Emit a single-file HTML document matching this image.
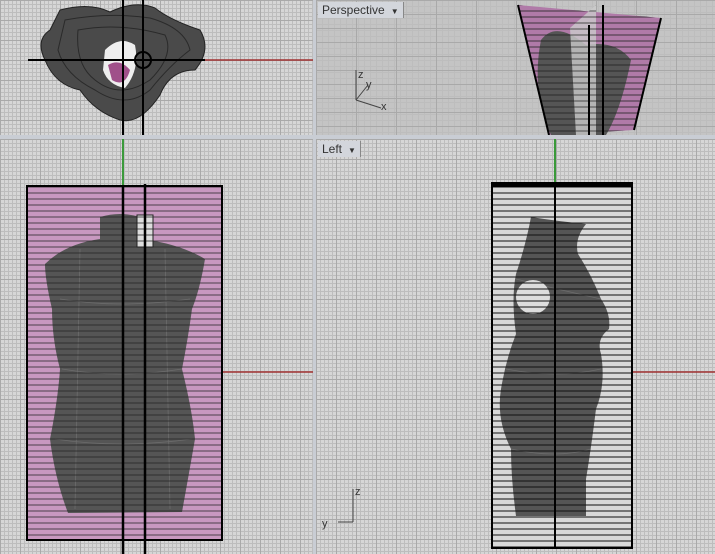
<!DOCTYPE html>
<html><head><meta charset="utf-8"><style>
html,body{margin:0;padding:0;width:715px;height:554px;overflow:hidden;background:#c9cdd4}
.vp{position:absolute;overflow:hidden;background-color:#d6d6d6;
background-image:linear-gradient(#a9a9a9 1px,transparent 1px),linear-gradient(90deg,#a9a9a9 1px,transparent 1px),linear-gradient(#bdbdbd 1px,transparent 1px),linear-gradient(90deg,#bdbdbd 1px,transparent 1px);
background-size:20px 20px,20px 20px,4px 4px,4px 4px}
.lbl{position:absolute;left:2px;top:2px;background:#d3d6dc;font:12px "Liberation Sans",sans-serif;color:#333;padding:1px 4px;border-right:1px solid #888}
.lbl span{display:inline-block;margin-left:6px;font-size:8px}
svg{position:absolute;left:0;top:0}
</style></head><body>
<div class="vp" style="left:0;top:0;width:313px;height:135px">
<svg width="313" height="135">
<line x1="205" y1="60" x2="313" y2="60" stroke="#a03030" stroke-width="1.5"/>
<path d="M60 10 Q90 2 110 12 Q135 0 155 8 Q170 20 200 30 Q212 50 195 70 Q170 70 160 95 Q140 125 120 120 Q95 112 80 90 Q55 85 45 60 Q35 40 50 30 Z" fill="#4a4a4a" stroke="#222"/>
<g fill="none" stroke="#2a2a2a" stroke-width="1"><path d="M65 20 Q110 12 150 18 Q185 28 190 50 Q170 65 150 90 Q125 110 95 90 Q65 75 58 50Z"/><path d="M78 30 Q120 22 165 35 Q175 55 150 80 Q120 100 95 80 Q75 65 78 30Z"/></g>
<path d="M105 50 Q120 35 135 45 Q140 70 125 88 Q108 85 103 70 Z" fill="#eee"/>
<path d="M108 65 Q120 58 130 70 Q125 88 112 80 Z" fill="#a0508a"/>
<line x1="28" y1="60" x2="205" y2="60" stroke="#000" stroke-width="2"/>
<line x1="123" y1="0" x2="123" y2="135" stroke="#000" stroke-width="2"/>
<line x1="143" y1="0" x2="143" y2="135" stroke="#000" stroke-width="2"/>
<circle cx="143" cy="60" r="8" fill="none" stroke="#000" stroke-width="2"/>
</svg></div>
<div class="vp" style="left:316px;top:0;width:399px;height:135px;background-color:#c4c4c4;background-size:30px 14px,40px 30px,6px 6px,6px 6px">
<svg width="399" height="135">
<defs><pattern id="hp" width="10" height="6" patternUnits="userSpaceOnUse"><line x1="0" y1="5" x2="10" y2="5" stroke="#222" stroke-width="1"/></pattern></defs>
<polygon points="202,5 345,18 318,130 233,135" fill="#b07aa8"/>
<path d="M225 40 Q240 20 270 45 Q300 40 315 60 Q305 110 290 135 L235 135 Q215 90 225 40Z" fill="#555"/>
<polygon points="202,5 345,18 318,130 233,135" fill="url(#hp)" opacity=".8"/>
<polygon points="254,28 280,5 280,135 260,135" fill="#ccc" opacity=".8"/>
<polygon points="254,28 280,5 280,135 260,135" fill="url(#hp)" opacity=".7"/>
<g stroke="#000" stroke-width="2" fill="none"><polyline points="202,5 233,135"/><polyline points="345,18 318,130"/><line x1="273" y1="25" x2="273" y2="135"/><line x1="287" y1="5" x2="287" y2="135"/></g>
<line x1="40" y1="70" x2="40" y2="100" stroke="#444"/><line x1="40" y1="100" x2="65" y2="108" stroke="#444"/><line x1="40" y1="100" x2="52" y2="85" stroke="#444"/>
<text x="42" y="78" font-size="11" font-family="Liberation Sans" fill="#333">z</text>
<text x="50" y="88" font-size="11" font-family="Liberation Sans" fill="#333">y</text>
<text x="65" y="110" font-size="11" font-family="Liberation Sans" fill="#333">x</text>
</svg><div class="lbl">Perspective<span>▼</span></div></div>
<div class="vp" style="left:0;top:139px;width:313px;height:415px">
<svg width="313" height="415">
<defs><pattern id="hp2" width="10" height="6" y="1" patternUnits="userSpaceOnUse"><line x1="0" y1="5" x2="10" y2="5" stroke="#222" stroke-width="1"/></pattern></defs>
<line x1="123" y1="0" x2="123" y2="47" stroke="#3a9a3a" stroke-width="2"/>
<line x1="222" y1="233" x2="313" y2="233" stroke="#a03030" stroke-width="1.5"/>
<rect x="27" y="47" width="195" height="354" fill="#c898c0"/>
<path d="M100 78 Q120 72 140 78 L142 100 Q180 105 205 120 Q200 150 192 170 Q188 200 182 230 Q192 270 195 300 Q188 340 182 373 L68 374 Q55 340 50 300 Q58 260 60 230 Q52 200 52 170 Q45 140 45 125 Q65 105 100 100 Z" fill="#555"/>
<g fill="none" stroke="#777" stroke-width=".8" opacity=".7"><path d="M60 160 Q120 170 190 160"/><path d="M62 230 Q120 240 182 230"/><path d="M55 300 Q120 310 192 300"/><path d="M80 110 L75 370"/><path d="M165 110 L170 370"/></g>
<rect x="137" y="76" width="16" height="32" fill="#ddd" stroke="#222"/>
<rect x="27" y="47" width="195" height="354" fill="url(#hp2)" opacity=".75"/>
<rect x="27" y="47" width="195" height="354" fill="none" stroke="#000" stroke-width="2"/>
<line x1="123" y1="47" x2="123" y2="415" stroke="#000" stroke-width="2.5"/>
<line x1="145" y1="45" x2="145" y2="415" stroke="#000" stroke-width="2.5"/>
</svg></div>
<div class="vp" style="left:316px;top:139px;width:399px;height:415px">
<svg width="399" height="415">
<defs><pattern id="hp3" width="10" height="6" y="1" patternUnits="userSpaceOnUse"><line x1="0" y1="5" x2="10" y2="5" stroke="#111" stroke-width="1"/></pattern></defs>
<line x1="239" y1="0" x2="239" y2="44" stroke="#3a9a3a" stroke-width="2"/>
<line x1="316" y1="233" x2="399" y2="233" stroke="#a03030" stroke-width="1.5"/>
<rect x="176" y="44" width="140" height="365" fill="#d8d8d8"/>
<path d="M215 78 Q240 82 270 85 Q258 100 262 115 Q275 135 285 160 Q295 175 293 190 Q280 200 285 215 Q290 245 280 270 Q275 310 270 340 L270 377 L200 377 Q195 340 195 310 Q180 280 185 250 Q190 220 200 195 Q195 160 200 135 Q210 105 215 78Z" fill="#555"/>
<g fill="none" stroke="#777" stroke-width=".8" opacity=".7"><path d="M200 140 Q240 150 285 160"/><path d="M190 230 Q240 240 285 230"/><path d="M195 310 Q240 320 275 310"/></g>
<circle cx="217" cy="158" r="17" fill="#ddd"/>
<rect x="176" y="44" width="140" height="365" fill="url(#hp3)"/>
<rect x="176" y="44" width="140" height="365" fill="none" stroke="#000" stroke-width="2"/>
<rect x="176" y="44" width="140" height="4" fill="#000"/>
<line x1="239" y1="44" x2="239" y2="409" stroke="#000" stroke-width="2"/>
<line x1="37" y1="350" x2="37" y2="383" stroke="#444"/><line x1="22" y1="383" x2="37" y2="383" stroke="#444"/>
<text x="39" y="356" font-size="11" font-family="Liberation Sans" fill="#333">z</text>
<text x="6" y="388" font-size="11" font-family="Liberation Sans" fill="#333">y</text>
</svg><div class="lbl">Left<span>▼</span></div></div>
</body></html>
